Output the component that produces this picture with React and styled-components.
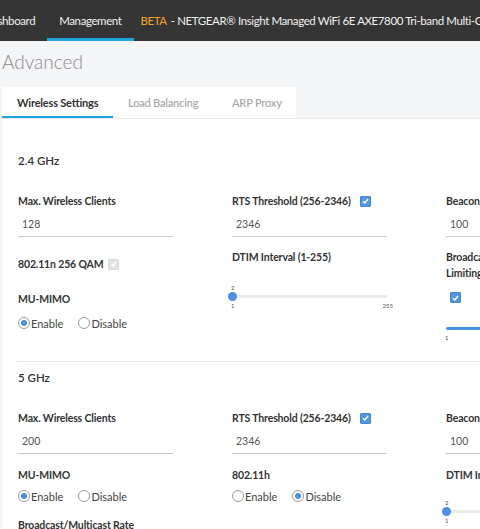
import React from "react";
import styled, { createGlobalStyle } from "styled-components";

const GlobalStyle = createGlobalStyle`
  html, body {
    margin: 0;
    padding: 0;
    background: #f4f5f7;
    font-family: Lato, "Noto Sans", sans-serif;
    overflow: hidden;
  }
`;

const Page = styled.div`
  width: 480px;
  height: 529px;
  overflow: hidden;
`;

const TopBar = styled.nav`
  display: flex;
  align-items: stretch;
  height: 41px;
  background: #353535;
  white-space: nowrap;
  overflow: hidden;
`;

const NavItem = styled.div`
  display: flex;
  align-items: center;
  flex-shrink: 0;
  padding: 0 12px;
  margin-left: ${(p) => p.$shift || 0}px;
  font-size: 11.5px;
  letter-spacing: -0.4px;
  color: #f0f0f0;
  border-bottom: 3px solid ${(p) => (p.$active ? "#1ea6dc" : "transparent")};
  border-top: 3px solid transparent;
`;

const Product = styled.div`
  display: flex;
  align-items: center;
  flex-shrink: 0;
  padding-left: 7px;
  font-size: 11.5px;
  letter-spacing: -0.4px;
  color: #f0f0f0;
`;

const Beta = styled.span`
  color: #f5a623;
  margin-right: 4px;
`;

const Content = styled.div`
  padding: 0 0 0 2px;
`;

const Title = styled.h1`
  margin: 0;
  padding: 9px 0 0 0;
  height: 37px;
  font-size: 19px;
  font-weight: 300;
  color: #8a8a8a;
  line-height: 24px;
`;

const Tabs = styled.div`
  display: inline-flex;
  height: 31px;
  background: #fff;
  vertical-align: top;
`;

const Tab = styled.div`
  display: flex;
  align-items: center;
  box-sizing: border-box;
  width: ${(p) => p.$w}px;
  padding: 1px 0 0 15px;
  white-space: nowrap;
  font-size: 11px;
  letter-spacing: -0.2px;
  font-weight: ${(p) => (p.$active ? 700 : 600)};
  color: ${(p) => (p.$active ? "#333" : "#ababab")};
  border-bottom: 2px solid ${(p) => (p.$active ? "#1ea6dc" : "transparent")};
`;

const Card = styled.div`
  margin: 0 0 0 1px;
  border-top: 1px solid #e6e8ea;
  background: #fff;
  padding: 26px 0 0 15px;
  min-height: 420px;
`;

const Section = styled.section`
  padding-top: 8px;
  border-bottom: ${(p) => (p.$divider ? "1px solid #e6e8ea" : "none")};
  height: ${(p) => p.$height || "auto"};
`;

const Band = styled.h2`
  margin: 0;
  font-size: 11.5px;
  font-weight: 600;
  line-height: 16px;
  color: #333;
`;

const Grid = styled.div`
  display: grid;
  grid-template-columns: 214px 214px 214px;
  margin-top: 24px;
`;

const Column = styled.div`
  display: flex;
  flex-direction: column;
`;

const Label = styled.div`
  display: flex;
  align-items: center;
  gap: ${(p) => p.$gap || 9}px;
  margin-top: ${(p) => p.$top || 0}px;
  font-size: 10.5px;
  letter-spacing: -0.15px;
  font-weight: 700;
  line-height: 16px;
  color: #333;
  white-space: nowrap;
`;

const Input = styled.div`
  width: 151px;
  height: 20px;
  margin-top: 5px;
  padding: 0 0 2px 4px;
  display: flex;
  align-items: center;
  font-size: 10.5px;
  color: #555;
  border-bottom: 1px solid #c8c8c8;
`;

const Check = styled.span`
  display: inline-flex;
  align-items: center;
  justify-content: center;
  width: 11px;
  height: 11px;
  margin-top: ${(p) => p.$top || 0}px;
  margin-left: ${(p) => p.$left || 0}px;
  border-radius: 2px;
  background: ${(p) => (p.$disabled ? "#e4e4e4" : "#5096e6")};
  box-shadow: inset 0 0 0 1px ${(p) => (p.$disabled ? "#dadada" : "#4a86cc")};
`;

const RadioRow = styled.div`
  display: flex;
  align-items: center;
  gap: 15px;
  margin-top: ${(p) => p.$top || 8}px;
  height: 16px;
  font-size: 11px;
  color: #444;
`;

const RadioOption = styled.label`
  display: flex;
  align-items: center;
  gap: 1px;
`;

const RadioDot = styled.span`
  display: inline-flex;
  align-items: center;
  justify-content: center;
  box-sizing: border-box;
  width: 12px;
  height: 12px;
  border-radius: 50%;
  border: 1px solid #9a9a9a;
  background: #fff;
  &::after {
    content: "";
    width: 6px;
    height: 6px;
    border-radius: 50%;
    background: ${(p) => (p.$on ? "#4a90e2" : "transparent")};
  }
`;

const Slider = styled.div`
  position: relative;
  width: 155px;
  height: 26px;
  margin-top: ${(p) => p.$top || 0}px;
  font-size: 6px;
  color: #555;
`;

const Track = styled.div`
  position: absolute;
  left: 0;
  right: 0;
  top: 11px;
  height: 3px;
  border-radius: 2px;
  background: ${(p) => (p.$filled ? "#4a90e2" : "#ebebeb")};
`;

const Thumb = styled.div`
  position: absolute;
  left: -4px;
  top: 8px;
  width: 9px;
  height: 9px;
  border-radius: 50%;
  background: #4a90e2;
`;

const Tick = styled.span`
  position: absolute;
  top: ${(p) => p.$top}px;
  left: ${(p) => (p.$right ? "auto" : "-1px")};
  right: ${(p) => (p.$right ? "-6px" : "auto")};
  line-height: 6px;
`;

function CheckMark() {
  return (
    <svg width="7" height="6" viewBox="0 0 7 6">
      <path d="M1 3.2 L2.8 5 L6 1" fill="none" stroke="#fff" strokeWidth="1.4" />
    </svg>
  );
}

function Radios({ value, top }) {
  return (
    <RadioRow $top={top}>
      <RadioOption>
        <RadioDot $on={value === "enable"} />
        Enable
      </RadioOption>
      <RadioOption>
        <RadioDot $on={value === "disable"} />
        Disable
      </RadioOption>
    </RadioRow>
  );
}

function RangeSlider({ top, filled, max, current }) {
  return (
    <Slider $top={top}>
      {current && <Tick $top={1}>{current}</Tick>}
      <Track $filled={filled} />
      {!filled && <Thumb />}
      <Tick $top={19}>1</Tick>
      {max && <Tick $top={19} $right>{max}</Tick>}
    </Slider>
  );
}

export default function App() {
  return (
    <Page>
      <GlobalStyle />
      <TopBar>
        <NavItem $shift={-28}>Dashboard</NavItem>
        <NavItem $active>Management</NavItem>
        <Product>
          <Beta>BETA</Beta>- NETGEAR® Insight Managed WiFi 6E AXE7800 Tri-band Multi-Gig Access Point
        </Product>
      </TopBar>
      <Content>
        <Title>Advanced</Title>
        <Tabs>
          <Tab $active $w={111}>Wireless Settings</Tab>
          <Tab $w={104}>Load Balancing</Tab>
          <Tab $w={79}>ARP Proxy</Tab>
        </Tabs>
        <Card>
          <Section $divider $height="208px">
            <Band>2.4 GHz</Band>
            <Grid>
              <Column>
                <Label>Max. Wireless Clients</Label>
                <Input>128</Input>
                <Label $top={19} $gap={5}>
                  802.11n 256 QAM
                  <Check $disabled>
                    <CheckMark />
                  </Check>
                </Label>
                <Label $top={19}>MU-MIMO</Label>
                <Radios value="enable" />
              </Column>
              <Column>
                <Label>
                  RTS Threshold (256-2346)
                  <Check>
                    <CheckMark />
                  </Check>
                </Label>
                <Input>2346</Input>
                <Label $top={12}>DTIM Interval (1-255)</Label>
                <RangeSlider top={19} current="2" max="255" />
              </Column>
              <Column>
                <Label>Beacon Interval (100-300)</Label>
                <Input>100</Input>
                <Label $top={12}>Broadcast/Multicast Rate</Label>
                <Label>Limiting</Label>
                <Check $top={11} $left={4}>
                  <CheckMark />
                </Check>
                <RangeSlider top={13} filled />
              </Column>
            </Grid>
          </Section>
          <Section>
            <Band>5 GHz</Band>
            <Grid>
              <Column>
                <Label>Max. Wireless Clients</Label>
                <Input>200</Input>
                <Label $top={13}>MU-MIMO</Label>
                <Radios value="enable" top={5} />
                <Label $top={13}>Broadcast/Multicast Rate</Label>
              </Column>
              <Column>
                <Label>
                  RTS Threshold (256-2346)
                  <Check>
                    <CheckMark />
                  </Check>
                </Label>
                <Input>2346</Input>
                <Label $top={13}>802.11h</Label>
                <Radios value="disable" top={5} />
              </Column>
              <Column>
                <Label>Beacon Interval (100-300)</Label>
                <Input>100</Input>
                <Label $top={13}>DTIM Interval (1-255)</Label>
                <RangeSlider top={16} current="2" max="255" />
              </Column>
            </Grid>
          </Section>
        </Card>
      </Content>
    </Page>
  );
}
